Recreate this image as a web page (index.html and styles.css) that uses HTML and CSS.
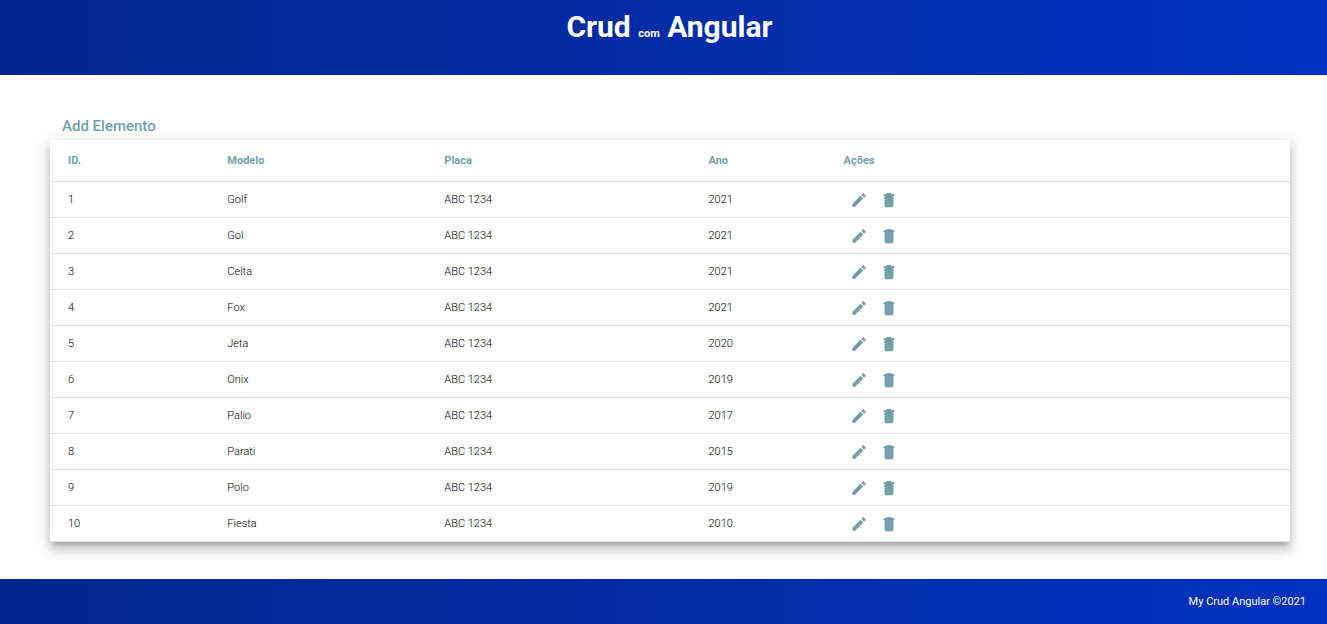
FILE: index.html
```
<!DOCTYPE html>
<html lang="pt-BR">
<head>
<meta charset="utf-8">
<title>Crud com Angular</title>
<link rel="stylesheet" href="styles.css">
</head>
<body>
<svg class="sprite" aria-hidden="true">
  <symbol id="edit" viewBox="0 0 24 24"><path d="M3 17.25V21h3.75L17.81 9.94l-3.75-3.75L3 17.25zM20.71 7.04c.39-.39.39-1.02 0-1.41l-2.34-2.34c-.39-.39-1.02-.39-1.41 0l-1.83 1.83 3.75 3.75 1.83-1.83z"/></symbol>
  <symbol id="delete" viewBox="0 0 24 24"><path d="M6 19.5c0 1.1.9 2 2 2h8c1.1 0 2-.9 2-2V6H6v13.500zM19 4h-3.500l-1-1.300h-5l-1 1.300H5v2.500h14V4z"/></symbol>
</svg>
<header class="header"><h1 class="title">Crud <small class="title-small">com</small> Angular</h1></header>
<main class="main">
  <button class="add" type="button">Add Elemento</button>
  <table class="table">
    <colgroup><col class="col-id"><col class="col-model"><col class="col-plate"><col class="col-year"><col></colgroup>
    <thead><tr><th>ID.</th><th>Modelo</th><th>Placa</th><th>Ano</th><th>Ações</th></tr></thead>
    <tbody id="rows"></tbody>
  </table>
</main>
<footer class="footer">My Crud Angular ©2021</footer>
<script src="app.js"></script>
</body>
</html>
```
FILE: styles.css
```
* { box-sizing: border-box; }
body {
  margin: 0;
  min-height: 100vh;
  display: flex;
  flex-direction: column;
  font-family: Roboto, "Liberation Sans", sans-serif;
  font-size: 11px;
  background: #fff;
}
.sprite { display: none; }
.header, .footer { background: linear-gradient(to right, #02268c, #0232c0); color: #fff; }
.header { height: 75px; padding: 8px 0 0 12px; text-align: center; }
.title { margin: 0; font-size: 30px; line-height: 38px; font-weight: 700; }
.title-small { font-size: 11px; }
.main { flex: 1; padding: 39px 37px 37px 50px; }
.add {
  display: block;
  margin-bottom: 1px;
  padding: 0 12px;
  border: 0;
  background: none;
  color: #739fa8;
  font: 500 15px/25px Roboto, sans-serif;
  cursor: pointer;
}
.table {
  width: 100%;
  table-layout: fixed;
  border-collapse: separate;
  border-spacing: 0;
  background: #fff;
  color: rgba(0, 0, 0, .87);
  box-shadow: 0 5px 5px -3px rgba(0, 0, 0, .2), 0 8px 10px 1px rgba(0, 0, 0, .14), 0 3px 14px 2px rgba(0, 0, 0, .12);
}
.col-id { width: 14.3%; }
.col-model { width: 17.5%; }
.col-plate { width: 21.3%; }
.col-year { width: 10.9%; }
.table th, .table td { padding: 0; border-bottom: 1px solid #e0e0e0; text-align: left; }
.table th:first-child, .table td:first-child { padding-left: 18px; }
.table th { height: 42px; color: #739fa8; font-weight: 700; }
.table td { height: 36px; color: #000; font-weight: 300; }
.actions { display: flex; gap: 12px; padding: 0 0 0 6px; }
.icon-button { display: block; padding: 0; border: 0; background: none; cursor: pointer; }
.icon { display: block; width: 18px; height: 18px; fill: #739fa8; }
.footer { height: 45px; padding-right: 21px; line-height: 45px; text-align: right; }
```
FILE: app.js
```
const cars = [
  ["Golf", 2021], ["Gol", 2021], ["Celta", 2021], ["Fox", 2021], ["Jeta", 2020],
  ["Onix", 2019], ["Palio", 2017], ["Parati", 2015], ["Polo", 2019], ["Fiesta", 2010]
];
document.getElementById("rows").innerHTML = cars.map(([model, year], i) => `
  <tr><td>${i + 1}</td><td>${model}</td><td>ABC 1234</td><td>${year}</td>
  <td><div class="actions">
    <button class="icon-button" type="button" aria-label="Editar ${model}"><svg class="icon"><use href="#edit"/></svg></button>
    <button class="icon-button" type="button" aria-label="Excluir ${model}"><svg class="icon"><use href="#delete"/></svg></button>
  </div></td></tr>`).join("");
```
